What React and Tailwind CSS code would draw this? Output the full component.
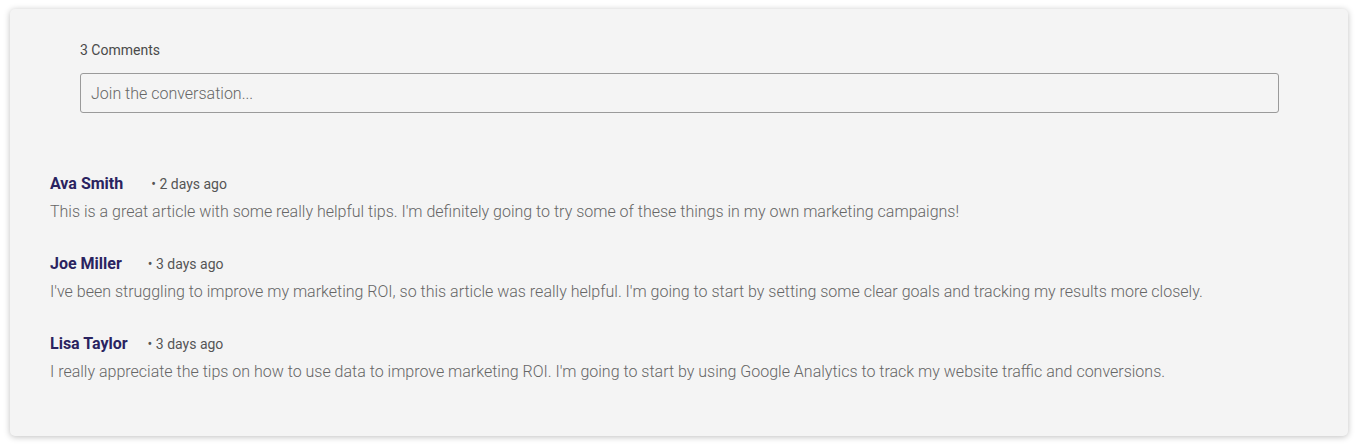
import React from 'react'

const comments = [
    {
        name: 'Ava Smith',
        time: '2 days ago',
        gap: 'ml-7',
        text: "This is a great article with some really helpful tips. I'm definitely going to try some of these things in my own marketing campaigns!",
    },
    {
        name: 'Joe Miller',
        time: '3 days ago',
        gap: 'ml-[26px]',
        text: "I've been struggling to improve my marketing ROI, so this article was really helpful. I'm going to start by setting some clear goals and tracking my results more closely.",
    },
    {
        name: 'Lisa Taylor',
        time: '3 days ago',
        gap: 'ml-5',
        text: "I really appreciate the tips on how to use data to improve marketing ROI. I'm going to start by using Google Analytics to track my website traffic and conversions.",
    },
]

const App = () => {
    return (
        <div className="min-h-screen bg-white pt-[9px] px-[10px] font-['Roboto',sans-serif]">
            <div className="bg-[#f4f4f4] rounded-[5px] shadow-[0_1px_6px_rgba(0,0,0,0.25)] pt-[31px] pb-[52px]">
                {/* header + input */}
                <div className="pl-[70px] pr-[69px]">
                    <p className="text-sm leading-5 text-[#4a4a4a] mb-[13px]">3 Comments</p>
                    <input
                        type="text"
                        placeholder="Join the conversation..."
                        className="w-full h-10 border border-[#9a9a9a] rounded-[3px] bg-transparent px-[10px] text-base text-[#555] placeholder:text-[#666] placeholder:font-light focus:outline-none"
                    />
                </div>

                {/* comment list */}
                <div className="px-10 mt-[59px] flex flex-col gap-[28px]">
                    {comments.map((c) => (
                        <div key={c.name}>
                            <div className="flex items-center mb-1">
                                <span className="text-base leading-6 font-bold text-[#2a2360]">{c.name}</span>
                                <span className={`${c.gap} text-sm leading-6 text-[#555]`}>• {c.time}</span>
                            </div>
                            <p className="text-base leading-6 font-light text-[#666]">{c.text}</p>
                        </div>
                    ))}
                </div>
            </div>
        </div>
    )
}

export default App
